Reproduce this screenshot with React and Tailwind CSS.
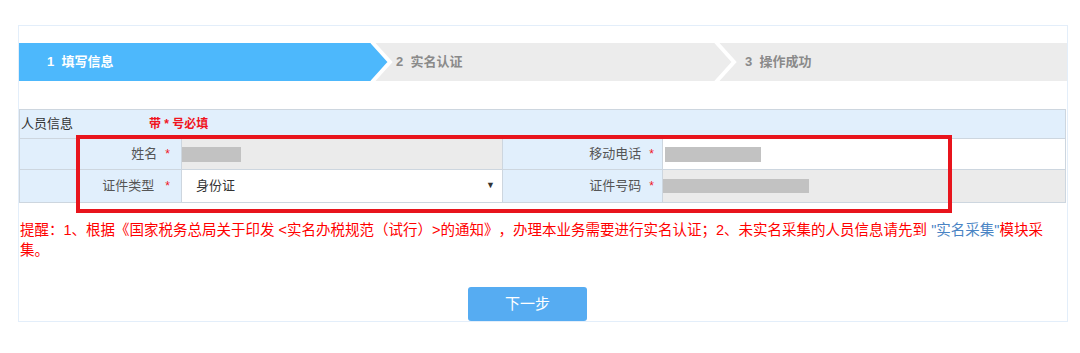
export default function App() {
  return (
    <div className="min-h-[353px] bg-white pt-[25px] pl-[18px] font-['Liberation_Sans','Noto_Sans_CJK_SC',sans-serif] [text-spacing-trim:space-all]">
      {/* main panel */}
      <div className="relative w-[1050px] border border-[#e3eefa] pt-[17px]">
        {/* step bar */}
        <div className="flex h-[38px] bg-[#ececec] text-[13px] font-bold">
          <div className="flex w-[349px] items-center bg-[#4db8fc] pl-[28px] text-white">1&nbsp; 填写信息</div>
          <svg width="24" height="38" viewBox="0 0 24 38" className="shrink-0 overflow-visible">
            <polygon points="0,0 4,0 22,19 4,38 0,38" fill="#4db8fc" />
            <polyline points="4,-1 22,19 4,39" fill="none" stroke="#fff" strokeWidth="4" />
          </svg>
          <div className="flex w-[320px] items-center pl-[4px] text-[#8a8a8a]">2&nbsp; 实名认证</div>
          <svg width="24" height="38" viewBox="0 0 24 38" className="shrink-0 overflow-visible">
            <polyline points="4,-1 22,19 4,39" fill="none" stroke="#fff" strokeWidth="4" />
          </svg>
          <div className="flex flex-1 items-center pl-[9px] text-[#8a8a8a]">3&nbsp; 操作成功</div>
        </div>

        {/* person info table */}
        <div className="mt-[28px] w-[1047px] border border-[#cdd6df] text-[13px]">
          <div className="flex h-[29px] items-center border-b border-[#cdd6df] bg-[#e1effc]">
            <span className="pl-px text-[#333]">人员信息</span>
            <span className="ml-[76px] text-[12px] font-bold text-[#f0141e]">带 * 号必填</span>
          </div>
          <div className="grid grid-cols-[59px_103px_321px_160px_1fr]">
            <div className="h-[31px] border-b border-r border-[#cdd6df] bg-[#e1effc]" />
            <div className="flex h-[31px] items-center justify-end gap-[8px] border-b border-r border-[#cdd6df] bg-[#e1effc] pr-[11px] text-[#555]">
              <span>姓名</span>
              <span className="text-[12px] text-[#f0141e]">*</span>
            </div>
            <div className="flex h-[31px] items-center border-b border-r border-[#cdd6df] bg-[#ebebeb]">
              <div className="h-[15px] w-[59px] bg-[#c2c2c2]" />
            </div>
            <div className="flex h-[31px] items-center justify-end gap-[8px] border-b border-r border-[#cdd6df] bg-[#e1effc] pr-[8px] text-[#555]">
              <span>移动电话</span>
              <span className="text-[12px] text-[#f0141e]">*</span>
            </div>
            <div className="flex h-[31px] items-center border-b border-[#cdd6df] bg-white pl-[2px]">
              <div className="h-[15px] w-[96px] bg-[#c2c2c2]" />
            </div>

            <div className="h-[32px] border-r border-[#cdd6df] bg-[#e1effc]" />
            <div className="flex h-[32px] items-center justify-end gap-[11px] border-r border-[#cdd6df] bg-[#e1effc] pr-[11px] text-[#555]">
              <span>证件类型</span>
              <span className="text-[12px] text-[#f0141e]">*</span>
            </div>
            <div className="flex h-[32px] items-center justify-between border-r border-[#cdd6df] bg-white pl-[14px] pr-[7px] text-[#333]">
              <span>身份证</span>
              <span className="text-[9px] text-[#333]">▼</span>
            </div>
            <div className="flex h-[32px] items-center justify-end gap-[8px] border-r border-[#cdd6df] bg-[#e1effc] pr-[8px] text-[#555]">
              <span>证件号码</span>
              <span className="text-[12px] text-[#f0141e]">*</span>
            </div>
            <div className="flex h-[32px] items-center bg-[#ebebeb]">
              <div className="h-[14px] w-[146px] bg-[#c2c2c2]" />
            </div>
          </div>
        </div>

        {/* notice */}
        <p className="mt-[17px] pl-px text-[14.5px] leading-[20px] text-[#ff0000]">
          提醒：1、根据《国家税务总局关于印发 &lt;实名办税规范（试行）&gt;的通知》，办理本业务需要进行实名认证；2、未实名采集的人员信息请先到 <span className="text-[#4a84c4]">"实名采集"</span>模块采集。
        </p>

        <button className="ml-[449px] mt-[27px] block h-[34px] w-[119px] rounded-[3px] bg-[#56acf2] text-[15px] text-white">下一步</button>

        {/* annotation box */}
        <div className="pointer-events-none absolute left-[57px] top-[109px] h-[78px] w-[876px] border-4 border-[#e8141c]" />
      </div>
    </div>
  );
}
